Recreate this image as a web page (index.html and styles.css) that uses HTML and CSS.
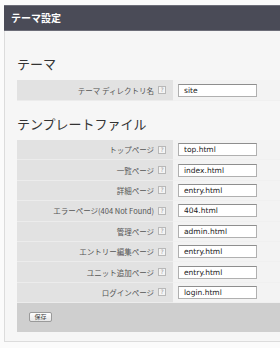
FILE: index.html
```html
<!DOCTYPE html>
<html>
<head>
    <title>テーマ設定</title>
    <link rel="stylesheet" href="styles.css">
</head>
<body>
    <div class="panel">
        <header class="panel-head">テーマ設定</header>
        <div class="panel-body">
            <h2>テーマ</h2>
            <div class="form-table">
                <div class="row">
                    <div class="label">テーマ ディレクトリ名<span class="help">?</span></div>
                    <div class="value"><input type="text" value="site"></div>
                </div>
            </div>

            <h2>テンプレートファイル</h2>
            <div class="form-table">
                <div class="row">
                    <div class="label">トップページ<span class="help">?</span></div>
                    <div class="value"><input type="text" value="top.html"></div>
                </div>
                <div class="row">
                    <div class="label">一覧ページ<span class="help">?</span></div>
                    <div class="value"><input type="text" value="index.html"></div>
                </div>
                <div class="row">
                    <div class="label">詳細ページ<span class="help">?</span></div>
                    <div class="value"><input type="text" value="entry.html"></div>
                </div>
                <div class="row">
                    <div class="label">エラーページ(404 Not Found)<span class="help">?</span></div>
                    <div class="value"><input type="text" value="404.html"></div>
                </div>
                <div class="row">
                    <div class="label">管理ページ<span class="help">?</span></div>
                    <div class="value"><input type="text" value="admin.html"></div>
                </div>
                <div class="row">
                    <div class="label">エントリー編集ページ<span class="help">?</span></div>
                    <div class="value"><input type="text" value="entry.html"></div>
                </div>
                <div class="row">
                    <div class="label">ユニット追加ページ<span class="help">?</span></div>
                    <div class="value"><input type="text" value="entry.html"></div>
                </div>
                <div class="row">
                    <div class="label">ログインページ<span class="help">?</span></div>
                    <div class="value"><input type="text" value="login.html"></div>
                </div>
            </div>
            <div class="actions">
                <button type="button">保存</button>
            </div>
        </div>
    </div>
</body>
</html>
```

FILE: styles.css
```css
body {
    background-color: #fbfbfb;
    font-family: "Noto Sans CJK JP", "DejaVu Sans", sans-serif;
    margin: 0;
    padding: 5px 0 0 4px;
}
.panel {
    background: #f6f6f6;
    border: 1px solid #dcdcdc;
    border-top: none;
    border-right: none;
    height: 337px;
    box-sizing: border-box;
}
.panel-head {
    background-color: #4a4b57;
    border-top: 1px solid #6c6d78;
    border-bottom: 1px solid #6c6d78;
    height: 26px;
    box-sizing: border-box;
    margin-left: -1px;
    padding-left: 7px;
    color: white;
    font-size: 10px;
    font-weight: bold;
    line-height: 24px;
}
.panel-body {
    padding: 0 0 0 12px;
}
h2 {
    color: #333;
    font-size: 13px;
    font-weight: normal;
    line-height: 16px;
    margin: 15px 0 8px 0;
}
h2:first-child {
    margin-top: 25px;
}
.form-table {
    background: #f3f3f3;
}
.row {
    display: flex;
    height: 20.4px;
    box-sizing: border-box;
    border-bottom: 1px solid #f0f0f0;
}
.form-table:first-of-type .row {
    height: 21px;
}
.label {
    width: 156px;
    flex-shrink: 0;
    background: #e2e2e2;
    border-bottom: 1px solid #ececec;
    margin-bottom: -1px;
    color: #555;
    font-size: 7.5px;
    display: flex;
    align-items: center;
    justify-content: flex-end;
    padding-right: 7px;
    box-sizing: border-box;
}
.help {
    display: inline-block;
    width: 6px;
    height: 6px;
    margin-left: 4px;
    border: 1px solid #b8b8b8;
    background: #f4f4f4;
    color: #999;
    font-family: "DejaVu Sans", sans-serif;
    font-size: 6px;
    line-height: 6px;
    text-align: center;
    overflow: hidden;
}
.value {
    flex: 1;
    display: flex;
    align-items: center;
    padding-left: 5px;
}
input {
    width: 79px;
    height: 13px;
    box-sizing: border-box;
    border: 1px solid #b0b0b0;
    border-top-color: #8e8e8e;
    background: white;
    padding: 0 0 0 5px;
    margin: 0;
    font-family: "DejaVu Sans", sans-serif;
    font-size: 7.5px;
    color: #222;
}
.actions {
    background: #cfcfcf;
    height: 29px;
    padding: 9px 0 0 12px;
    box-sizing: border-box;
    display: flex;
    align-items: flex-start;
}
button {
    width: 23px;
    height: 10px;
    padding: 0;
    border: 1px solid #9a9a9a;
    border-radius: 2px;
    background: linear-gradient(#ffffff, #e6e6e6);
    font-family: "Noto Sans CJK JP", sans-serif;
    font-size: 6px;
    line-height: 8px;
    color: #444;
}
```
